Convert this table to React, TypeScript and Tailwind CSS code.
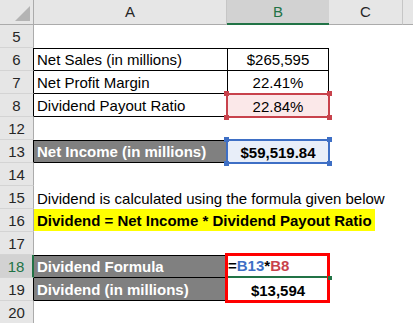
import React from "react";

const RowHead = ({ n, sel = false, dark = false }: { n: string; sel?: boolean; dark?: boolean }) => (
  <div
    className={`flex items-end justify-center pb-[1px] text-[15px] leading-[19px] border-b border-b-[#d4d4d4] ${
      sel
        ? "bg-[#d2d2d2] text-[#217346] border-r-2 border-r-[#217346]"
        : `bg-[#e6e6e6] text-[#262626] border-r ${dark ? "border-r-black" : "border-r-[#ababab]"}`
    }`}
  >
    {n}
  </div>
);

const Handle = ({ pos, color }: { pos: string; color: string }) => (
  <span className={`absolute w-[5px] h-[5px] ${pos} ${color}`} />
);

const Empty = ({ cls = "" }: { cls?: string }) => <div className={cls} />;

export default function App() {
  return (
    <div className="w-[413px] h-[323px] overflow-hidden bg-white font-['Liberation_Sans',Arial,sans-serif] text-black">
      <div className="grid grid-cols-[34px_193px_102px_74px_10px] grid-rows-[25px_repeat(13,23px)]">
        {/* header row */}
        <div className="relative bg-[#e6e6e6] border-b border-r border-[#ababab]">
          <svg className="absolute left-[15px] top-[6px]" width="15" height="15" viewBox="0 0 15 15">
            <polygon points="15,0 15,15 0,15" fill="#b4b4b4" />
          </svg>
        </div>
        <div className="flex items-end justify-center pb-[4px] leading-[17px] text-[15px] text-[#262626] bg-[#e6e6e6] border-b border-b-[#ababab] border-r border-r-[#c6c6c6]">A</div>
        <div className="flex items-end justify-center pb-[3px] leading-[17px] text-[15px] text-[#217346] bg-[#d2d2d2] border-b-2 border-b-[#217346]">B</div>
        <div className="flex items-end justify-center pb-[4px] leading-[17px] text-[15px] text-[#262626] bg-[#e6e6e6] border-b border-b-[#ababab] border-r border-r-[#c6c6c6]">C</div>
        <div className="bg-[#e6e6e6] border-b border-b-[#ababab]" />

        {/* row 5 */}
        <RowHead n="5" />
        <Empty />
        <Empty />
        <Empty />
        <Empty />

        {/* row 6 */}
        <RowHead n="6" dark />
        <div className="flex items-end px-[3px] pb-[1px] text-[15px] leading-[19px] whitespace-nowrap border-t border-b border-black">Net Sales (in millions)</div>
        <div className="flex items-end justify-center pb-[1px] text-[15px] leading-[19px] border border-black">$265,595</div>
        <Empty />
        <Empty />

        {/* row 7 */}
        <RowHead n="7" dark />
        <div className="flex items-end px-[3px] pb-[1px] text-[15px] leading-[19px] whitespace-nowrap border-b border-black">Net Profit Margin</div>
        <div className="flex items-end justify-center pb-[1px] text-[15px] leading-[19px] border-l border-r border-b border-black">22.41%</div>
        <Empty />
        <Empty />

        {/* row 8 */}
        <RowHead n="8" dark />
        <div className="flex items-end px-[3px] pb-[1px] text-[15px] leading-[19px] whitespace-nowrap border-b border-black">Dividend Payout Ratio</div>
        <div className="relative flex items-end justify-center pb-[1px] text-[15px] leading-[19px] bg-[#fbe8e9]">
          <div className="absolute -left-[1px] -right-[1px] -top-[1px] -bottom-[1px] border-2 border-[#c8424c]" />
          <Handle pos="-left-[3px] -top-[3px]" color="bg-[#c8424c]" />
          <Handle pos="-right-[3px] -top-[3px]" color="bg-[#c8424c]" />
          <Handle pos="-left-[3px] -bottom-[3px]" color="bg-[#c8424c]" />
          <Handle pos="-right-[3px] -bottom-[3px]" color="bg-[#c8424c]" />
          <span className="relative">22.84%</span>
        </div>
        <Empty />
        <Empty />

        {/* row 12 */}
        <RowHead n="12" />
        <Empty />
        <Empty />
        <Empty />
        <Empty />

        {/* row 13 */}
        <RowHead n="13" dark />
        <div className="flex items-end px-[3px] pb-[1px] text-[15px] leading-[19px] font-bold text-white whitespace-nowrap bg-[#808080] border-t border-b border-r border-black">Net Income (in millions)</div>
        <div className="relative flex items-end justify-center pb-[1px] text-[15px] leading-[19px] font-bold bg-[#e8eef9]">
          <div className="absolute -left-[1px] -right-[1px] -top-[1px] -bottom-[1px] border-2 border-[#3e6fc5]" />
          <Handle pos="-left-[3px] -top-[3px]" color="bg-[#3e6fc5]" />
          <Handle pos="-right-[3px] -top-[3px]" color="bg-[#3e6fc5]" />
          <Handle pos="-left-[3px] -bottom-[3px]" color="bg-[#3e6fc5]" />
          <Handle pos="-right-[3px] -bottom-[3px]" color="bg-[#3e6fc5]" />
          <span className="relative">$59,519.84</span>
        </div>
        <Empty />
        <Empty />

        {/* row 14 */}
        <RowHead n="14" />
        <Empty />
        <Empty />
        <Empty />
        <Empty />

        {/* row 15 */}
        <RowHead n="15" />
        <div className="col-span-4 flex items-end px-[3px] pb-[1px] text-[15px] leading-[19px] whitespace-nowrap">
          Dividend is calculated using the formula given below
        </div>

        {/* row 16 */}
        <RowHead n="16" />
        <div className="col-span-4 flex">
          <div className="w-[341px] h-[22px] flex items-end px-[3px] pb-[1px] text-[15px] leading-[19px] font-bold whitespace-nowrap bg-[#ffff00]">
            Dividend = Net Income * Dividend Payout Ratio
          </div>
        </div>

        {/* row 17 */}
        <RowHead n="17" />
        <Empty />
        <Empty />
        <Empty />
        <Empty />

        {/* row 18 */}
        <RowHead n="18" sel />
        <div className="flex items-end px-[3px] pb-[1px] text-[15px] leading-[19px] font-bold text-white whitespace-nowrap bg-[#808080] border-t border-b border-black">Dividend Formula</div>
        <div className="relative row-span-2 flex flex-col">
          <div className="absolute -left-[2px] -right-[1px] -top-[2px] -bottom-[2px] border-[3px] border-[#ff0000]" />
          <div className="h-[23px] flex items-end pl-[1px] pb-[1px] text-[15px] leading-[19px] font-bold border-b-2 border-[#217346]">
            <span>=</span>
            <span className="text-[#3e6fc5]">B13</span>
            <span>*</span>
            <span className="text-[#c8424c]">B8</span>
          </div>
          <div className="flex-1 flex items-end justify-center pb-[1px] text-[15px] leading-[19px] font-bold">$13,594</div>
          <span className="absolute right-[-3px] top-[21px] w-[4px] h-[4px] bg-[#217346]" />
        </div>
        <Empty />
        <Empty />

        {/* row 19 */}
        <RowHead n="19" dark />
        <div className="flex items-end px-[3px] pb-[1px] text-[15px] leading-[19px] font-bold text-white whitespace-nowrap bg-[#808080] border-b border-black">Dividend (in millions)</div>
        <Empty />
        <Empty />

        {/* row 20 */}
        <RowHead n="20" />
        <Empty />
        <Empty />
        <Empty />
        <Empty />
      </div>
    </div>
  );
}
